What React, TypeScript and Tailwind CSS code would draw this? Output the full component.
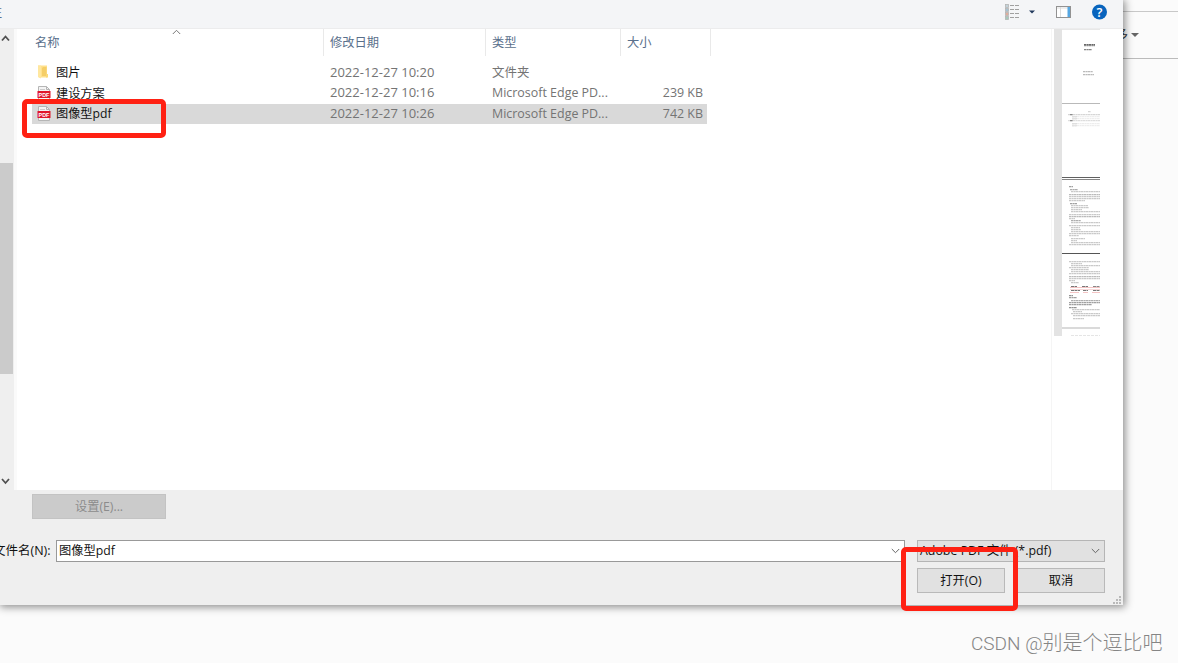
import { useState } from "react";

type FileRow = {
  name: string;
  date: string;
  type: string;
  size: string;
  kind: "folder" | "pdf";
};

type Line = [x: number, y: number, width: number, color: string];

const files: FileRow[] = [
  { name: "图片", date: "2022-12-27 10:20", type: "文件夹", size: "", kind: "folder" },
  { name: "建设方案", date: "2022-12-27 10:16", type: "Microsoft Edge PD...", size: "239 KB", kind: "pdf" },
  { name: "图像型pdf", date: "2022-12-27 10:26", type: "Microsoft Edge PD...", size: "742 KB", kind: "pdf" },
];

// text lines on the preview pages, in preview pane coordinates
const previewLines: Line[] = [
  [30, 15, 11, "#444"], [30, 16, 11, "#777"], [30, 20, 8, "#666"],
  [29, 42, 10, "#aaa"], [29, 45, 11, "#aaa"],
  [34, 82, 3, "#ccc"],
  [14, 85, 32, "#ccc"], [16, 85, 3, "#777"], [18, 87, 5, "#aaa"], [18, 87, 28, "#e8e8e8"], [18, 89, 5, "#aaa"], [18, 89, 28, "#e8e8e8"],
  [14, 91, 32, "#d4d4d4"], [16, 91, 3, "#777"], [18, 94, 5, "#aaa"], [18, 94, 28, "#e8e8e8"], [18, 96, 5, "#bbb"], [18, 96, 28, "#e8e8e8"],
  [15, 157, 4, "#888"], [16, 160, 8, "#999"], [17, 162, 29, "#bbb"], [15, 165, 31, "#aaa"],
  [15, 167, 31, "#bbb"], [15, 169, 31, "#bbb"], [15, 171, 16, "#bbb"], [16, 174, 7, "#888"],
  [17, 176, 17, "#bbb"], [17, 178, 18, "#bbb"], [17, 180, 11, "#bbb"], [17, 182, 29, "#bbb"],
  [15, 185, 31, "#bbb"], [15, 187, 31, "#aaa"], [15, 189, 6, "#bbb"], [17, 191, 10, "#999"],
  [17, 193, 29, "#bbb"], [15, 196, 31, "#bbb"], [17, 198, 9, "#bbb"], [17, 200, 10, "#bbb"],
  [17, 202, 29, "#bbb"], [15, 204, 31, "#bbb"], [15, 206, 10, "#bbb"], [17, 209, 14, "#bbb"],
  [17, 211, 6, "#bbb"], [17, 213, 29, "#bbb"], [15, 215, 31, "#bbb"],
  [15, 232, 31, "#bbb"], [17, 234, 11, "#bbb"], [17, 236, 29, "#bbb"], [15, 238, 20, "#bbb"],
  [17, 240, 18, "#bbb"], [17, 242, 29, "#bbb"], [15, 244, 31, "#bbb"], [15, 247, 31, "#aaa"],
  [15, 249, 31, "#bbb"], [15, 251, 6, "#bbb"], [17, 253, 8, "#bbb"],
  [15, 266, 4, "#777"], [15, 268, 8, "#888"], [17, 271, 29, "#999"], [15, 273, 31, "#888"],
  [15, 275, 23, "#888"], [15, 278, 8, "#777"], [18, 280, 28, "#bbb"], [19, 282, 9, "#bbb"],
  [17, 284, 29, "#bbb"], [19, 286, 27, "#bbb"], [19, 289, 11, "#bbb"],
];

const redRows: Line[] = [
  [17, 257, 6, "#777"], [28, 257, 6, "#777"], [39, 257, 7, "#888"],
  [17, 261, 9, "#777"], [29, 261, 5, "#777"], [39, 261, 7, "#777"],
];

function FolderIcon() {
  return (
    <svg width="16" height="16" viewBox="0 0 16 16">
      <path d="M1 1.5h9v12H2l-1-1z" fill="#ffe08a" />
      <path d="M6 3h3.5v9H5V4z" fill="#f5ce68" />
      <path d="M1 1.5h3v13l-3-1.5z" fill="#ffe79f" />
      <path d="M9 10h2v3.5H9z" fill="#fbd976" />
    </svg>
  );
}

function PdfIcon() {
  return (
    <svg width="14" height="15" viewBox="0 0 14 15">
      <path d="M1.5 .5h8l3 3v11h-11z" fill="#f4f4f4" stroke="#b5b5b5" />
      <path d="M9.5 .5v3h3" fill="none" stroke="#b5b5b5" />
      <path d="M3 3.5h5" stroke="#ccc" />
      <rect x=".5" y="5" width="13" height="7" fill="#e0162b" />
      <text x="7" y="10.5" fill="#fff" fontSize="5.4" fontWeight="700" textAnchor="middle" fontFamily="Liberation Sans, sans-serif">
        PDF
      </text>
    </svg>
  );
}

function Chevron({ up = false, className = "" }: { up?: boolean; className?: string }) {
  return (
    <svg width="9" height="6" viewBox="0 0 9 6" className={className} fill="none" stroke="currentColor">
      <path d={up ? "M.8 5l3.7-3.7L8.2 5" : "M.8 1l3.7 3.7L8.2 1"} />
    </svg>
  );
}

function Toolbar() {
  return (
    <div className="flex h-[29px] shrink-0 justify-end border-b border-[#ececed] bg-[#f4f5f7]">
      <svg width="120" height="26" viewBox="0 0 120 26" className="-mt-px">
        {[5.5, 9.5, 13.5, 17.5].map((y, i) => (
          <g key={y}>
            <rect x="2.5" y={y} width="3" height="3" fill={["#c3d3da", "#a5c3d3", "#dfae9c", "#a5cbbb"][i]} stroke="#b5b5b5" strokeWidth=".8" />
            <path d={`M7 ${y + 1}h4m1 0h4`} stroke="#a0a0a0" />
          </g>
        ))}
        <path d="M26 11.5h6l-3 3z" fill="#21385c" />
        <rect x="53.5" y="7.5" width="14" height="11" fill="#fff" stroke="#929292" />
        <path d="M54 9h13M57.5 8v10" stroke="#ddd" />
        <path d="M64.5 8H67v10h-2.500z" fill="#56a7e2" />
        <circle cx="96.500" cy="13" r="7.5" fill="#0864bd" />
        <text x="96.500" y="17.500" textAnchor="middle" fontSize="13" fontWeight="600" fill="#fff" fontFamily="Open Sans, sans-serif">
          ?
        </text>
      </svg>
    </div>
  );
}

function ScrollBar() {
  return (
    <div className="flex w-[17px] shrink-0 flex-col border-r-[3px] border-[#fafafa] bg-[#efefef] text-[#505050]">
      <svg width="12" height="20" viewBox="0 0 12 20" fill="none" stroke="currentColor" strokeWidth="1.8">
        <path d="M2 11.500l3.500-4L9 11.500" />
      </svg>
      <div className="mt-[114px] h-[211px] w-[13px] bg-[#cbcbcb]" />
      <svg width="12" height="20" viewBox="0 0 12 20" fill="none" stroke="currentColor" strokeWidth="1.8" className="mt-auto">
        <path d="M2 9l3.500 4L9 9" />
      </svg>
    </div>
  );
}

function PreviewPane() {
  return (
    <div className="w-[72px] shrink-0 border-l border-[#f5f5f5] pl-[2px]">
      <svg width="46" height="308" viewBox="0 0 46 308">
        <path d="M0 0h8v307H0z" fill="#e3e3e3" />
        <path d="M8 0h38v1H8z" fill="#e8e8e8" />
        {previewLines.map(([x, y, w, color], i) => (
          <path
            key={i}
            d={`M${x} ${y + 0.7}h${w}`}
            stroke={color}
            strokeWidth="1.2"
            strokeDasharray="2.600 .4 1.700 .3"
            strokeOpacity=".8"
          />
        ))}
        <path d="M16 258.500h30M16 263.500h9M29 263.500h5M38 263.500h8" stroke="#f3c4c4" />
        <path d="M16 260.500h30" stroke="#f8dada" />
        {redRows.map(([x, y, w, color], i) => (
          <path key={i} d={`M${x} ${y + 0.5}h${w}`} stroke={color} strokeDasharray="3 .5" />
        ))}
        <path d="M8 74.500h38" stroke="#b9b9b9" />
        <path d="M8 148.500h38" stroke="#606060" />
        <path d="M8 150.500h38" stroke="#858585" />
        <path d="M8 224.500h38" stroke="#555" />
        <path d="M8 299h38" stroke="#b5b5b5" />
        <path d="M17 306.500h29" stroke="#e5e5e5" strokeDasharray="3 1" />
      </svg>
    </div>
  );
}

function FileList({ selected, onSelect }: { selected: string; onSelect: (name: string) => void }) {
  return (
    <div className="flex-1 bg-white">
      <div className="relative flex h-[27px] text-[12.25px] leading-[27px] text-[#596f8b]">
        <Chevron up className="absolute top-0 left-[155px] text-[#777]" />
        <div className="w-[307px] border-r border-[#e9e9e9] pl-[18px]">名称</div>
        <div className="w-[162px] border-r border-[#e9e9e9] pl-[6px]">修改日期</div>
        <div className="w-[135px] border-r border-[#e9e9e9] pl-[6px]">类型</div>
        <div className="w-[90px] border-r border-[#e9e9e9] pl-[6px]">大小</div>
      </div>
      <div className="mt-[6px] ml-[15px] w-[675px]">
        {files.map((f) => (
          <div
            key={f.name}
            onClick={() => onSelect(f.name)}
            className={`flex h-[20.8px] items-center text-[13px] text-[#747474] ${
              selected === f.name ? "bg-[#d9d9d9]" : ""
            }`}
          >
            <div className="flex w-[298px] items-center text-[12.2px] text-[#111]">
              <span className="flex w-6 pl-[5px]">{f.kind === "folder" ? <FolderIcon /> : <PdfIcon />}</span>
              <span className="pt-px">{f.name}</span>
            </div>
            <div className="w-[162px]">{f.date}</div>
            <div className="w-[135px] pt-px text-[12.45px]">{f.type}</div>
            <div className="w-[76px] pt-px text-right text-[12.45px]">{f.size}</div>
          </div>
        ))}
      </div>
    </div>
  );
}

export default function App() {
  const [selected, setSelected] = useState("图像型pdf");

  return (
    <div className="relative h-[663px] w-[1178px] overflow-hidden bg-[#fbfbfb] font-['Open_Sans','Noto_Sans_CJK_SC',sans-serif] whitespace-nowrap">
      <div className="ml-auto flex h-[59px] w-[55px] flex-col border-b border-[#bbb]">
        <div className="h-3 border-b border-[#c8c8c8]" />
        <div className="flex flex-1 items-center text-[13px] text-[#333]">
          <span className="-ml-2 w-[16px]">多</span>
          <svg width="9" height="6" viewBox="0 0 9 6">
            <path d="M0 1h8L4 5z" fill="#666" />
          </svg>
        </div>
      </div>

      <div className="absolute top-0 left-0 flex h-[605px] w-[1123px] flex-col bg-[#efefef] shadow-[1px_1px_8px_1px_rgba(0,0,0,0.45)]">
        <Toolbar />
        <div className="absolute top-[4px] -left-[10px] text-[12px] text-[#596f8b]">注</div>
        <div className="flex h-[461px] shrink-0 bg-white">
          <ScrollBar />
          <FileList selected={selected} onSelect={setSelected} />
          <PreviewPane />
        </div>

        <div className="pt-1 pl-8 text-[12.25px] text-[#111]">
          <button disabled className="h-[25px] w-[134px] border border-[#c3c3c3] bg-[#cbcbcb] pt-px text-[#8c8c8c]">
            设置(E)...
          </button>
          <div className="mt-[21px] -ml-[39px] flex h-[22px] items-center">
            <label className="w-[63px] text-[12.5px] leading-[22px]">文件名(N):</label>
            <div className="flex h-[22px] w-[849px] items-center justify-between border border-[#999] bg-white pr-1 pl-[2px]">
              <span>{selected}</span>
              <Chevron className="text-[#666]" />
            </div>
            <div className="ml-3 flex h-[22px] w-[188px] items-center justify-between border border-[#b5b5b5] bg-[#e1e1e1] pr-1 pl-[2px]">
              <span className="text-[12.4px]">Adobe PDF 文件 (*.pdf)</span>
              <Chevron className="text-[#666]" />
            </div>
          </div>
          <div className="mt-[6px] ml-[885px] flex">
            <button className="h-[25px] w-[88px] border border-[#b9b9b9] bg-[#e1e1e1] pt-px">打开(O)</button>
            <button className="ml-[12px] h-[25px] w-[88px] border border-[#b9b9b9] bg-[#e1e1e1] pt-px">取消</button>
          </div>
        </div>
        <svg width="9" height="9" viewBox="0 0 9 9" className="absolute right-px bottom-0" fill="#b9b9b9">
          <path d="M6 0h2v2H6zM3 3h2v2H3zM6 3h2v2H6zM0 6h2v2H0zM3 6h2v2H3zM6 6h2v2H6z" />
        </svg>
      </div>

      <div className="absolute top-[99px] left-[22px] h-[39px] w-[144px] rounded-[5px] border-[5px] border-[#ff2113]" />
      <div className="absolute top-[547px] left-[901px] h-[64px] w-[117px] rounded-[5px] border-[5px] border-[#ff2113]" />
      <div className="absolute top-[628px] left-[971px] font-['Roboto','Noto_Sans_CJK_SC',sans-serif] text-[20px] leading-[30px] font-light text-[#858585]">
        <span className="text-[19px]">CSDN @</span>别是个逗比吧
      </div>
    </div>
  );
}
